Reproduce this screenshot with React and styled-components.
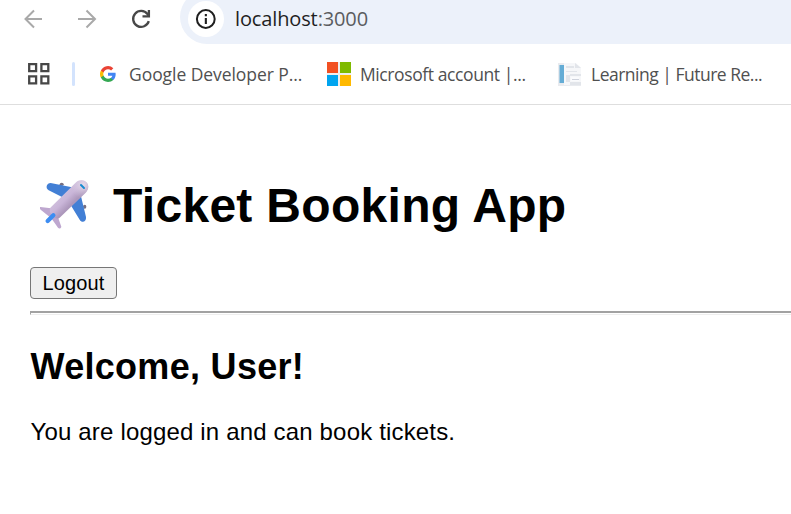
import React from 'react';
import styled, { createGlobalStyle } from 'styled-components';

const GlobalStyle = createGlobalStyle`
  * { box-sizing: border-box; }
  body {
    margin: 0;
    background: #fff;
    overflow: hidden;
    font-family: "Liberation Sans", Arial, sans-serif;
  }
`;

const Window = styled.div`
  width: 100%;
  height: 514px;
  overflow: hidden;
`;

const Toolbar = styled.div`
  display: flex;
  height: 44px;
  padding-left: 20px;
`;

const NavButton = styled.span`
  display: flex;
  flex: none;
  width: 54px;
  height: 38px;
  color: ${(p) => (p.$active ? '#474747' : '#a9a9a9')};
`;

const AddressBar = styled.div`
  flex: 1;
  display: flex;
  align-items: center;
  height: 54px;
  margin: -10px 0 0 -2px;
  padding: 3px 8px 0;
  background: #ecf1fa;
  border-radius: 27px 0 0 27px;
`;

const SiteInfo = styled.span`
  display: flex;
  width: 36px;
  height: 36px;
  border-radius: 50%;
  background: #fff;
`;

const Url = styled.span`
  margin-left: 11px;
  font: 20px/24px "Open Sans", "Noto Sans", sans-serif;
  letter-spacing: -0.13px;
  color: #1f1f1f;
`;

const Port = styled.span`
  color: #5a5c60;
`;

const Bookmarks = styled.div`
  display: flex;
  align-items: center;
  height: 61px;
  padding-left: 27px;
  border-bottom: 1px solid #dedede;
`;

const Divider = styled.span`
  flex: none;
  width: 3px;
  height: 24px;
  margin: 0 25px 0 22px;
  border-radius: 2px;
  background: #d3e3fd;
`;

const Bookmark = styled.span`
  display: flex;
  flex: none;
  align-items: center;
  gap: ${(p) => p.$gap}px;
  width: ${(p) => p.$width}px;
`;

const BookmarkLabel = styled.span`
  padding-bottom: 1px;
  font: 17.5px/24px "Open Sans", "Noto Sans", sans-serif;
  letter-spacing: ${(p) => p.$spacing};
  white-space: nowrap;
  color: #505050;
`;

const Icon = styled.svg`
  display: block;
  flex: none;
`;

const Page = styled.main`
  padding: 72px 0 0 30px;
`;

const Title = styled.h1`
  display: flex;
  align-items: center;
  gap: 23px;
  height: 56px;
  margin: 0 0 34px;
  padding-left: 10px;
  font-size: 48px;
  line-height: 56px;
  letter-spacing: 0.3px;
  white-space: nowrap;
`;

const TitleText = styled.span`
  padding-top: 2px;
`;

const LogoutButton = styled.button`
  display: block;
  width: 87px;
  height: 32px;
  padding: 0;
  border: 1.5px solid #767676;
  border-radius: 4px;
  background: #efefef;
  color: #000;
  font: 20px/26px "Liberation Sans", Arial, sans-serif;
  letter-spacing: 0.1px;
`;

const Rule = styled.hr`
  height: 4px;
  margin: 12px 0 0;
  border: 1px solid #a2a2a2;
  border-top-width: 2px;
  border-right: 0;
  border-bottom-color: #eeeeee;
`;

const Welcome = styled.h2`
  margin: 31px 0 0 0.5px;
  font-size: 36px;
  line-height: 42px;
  letter-spacing: 0.3px;
`;

const Message = styled.p`
  margin: 30px 0 0 0.5px;
  font-size: 24px;
  line-height: 28px;
  letter-spacing: 0.17px;
`;

const Back = () => (
  <Icon width="27" height="38" viewBox="0 0 27 38" fill="none" stroke="currentColor" strokeWidth="2">
    <path d="M22 19H5.5M14 10.5L5.5 19l8.5 8.5" />
  </Icon>
);

const Forward = () => (
  <Icon width="27" height="38" viewBox="0 0 27 38" fill="none" stroke="currentColor" strokeWidth="2">
    <path d="M4 19h16.5M12.5 10.5L21 19l-8.500 8.500" />
  </Icon>
);

const Reload = () => (
  <Icon width="27" height="38" viewBox="0 0 27 38" fill="none" stroke="currentColor" strokeWidth="2.3">
    <path d="M20.8 21.2A8 8 0 1 1 19.5 14l1.5 2.2" />
    <path d="M14.5 16.3h6.4V10" />
  </Icon>
);

const Info = () => (
  <Icon width="36" height="36" viewBox="0 0 36 36">
    <circle cx="17.8" cy="18" r="8.9" fill="none" stroke="#1f1f1f" strokeWidth="2" />
    <path d="M16.8 13h2.1v2.2h-2.1zM16.8 17h2.1v6h-2.1z" fill="#1f1f1f" />
  </Icon>
);

const Apps = () => (
  <Icon width="23" height="22" viewBox="0 0 23 22" fill="none" stroke="#474747" strokeWidth="2.3">
    <path d="M2.2 1.2h6.9v6.9H2.2zM14.4 1.2h6.9v6.9h-6.9zM2.2 13.4h6.9v6.9H2.2zM14.4 13.4h6.9v6.9h-6.9z" />
  </Icon>
);

const Google = () => (
  <Icon width="16" height="16" viewBox="0 0 24 24">
    <path fill="#4285f4" d="M23.5 12.3c0-.8-.1-1.6-.2-2.3H12v4.5h6.5a5.6 5.6 0 0 1-2.4 3.6v3h3.8c2.3-2.1 3.6-5.2 3.6-8.8z" />
    <path fill="#34a853" d="M12 24c3.2 0 6-1.1 7.9-2.9l-3.8-3c-1.1.7-2.4 1.1-4.1 1.1-3.1 0-5.8-2.1-6.7-4.9H1.3v3.1A12 12 0 0 0 12 24z" />
    <path fill="#fbbc05" d="M5.3 14.3a7.2 7.2 0 0 1 0-4.6V6.6h-4a12 12 0 0 0 0 10.8z" />
    <path fill="#ea4335" d="M12 4.8c1.8 0 3.3.6 4.6 1.8L20 3.2A12 12 0 0 0 1.3 6.6l4 3.1C6.2 6.9 8.9 4.8 12 4.8z" />
  </Icon>
);

const Microsoft = () => (
  <Icon width="24" height="24" viewBox="0 0 24 24">
    <path fill="#eeeeee" d="M0 0h24v24H0z" />
    <path fill="#f25022" d="M0 0h11v11H0z" />
    <path fill="#7fba00" d="M13 0h11v11H13z" />
    <path fill="#00a4ef" d="M0 13h11v11H0z" />
    <path fill="#ffb900" d="M13 13h11v11H13z" />
  </Icon>
);

const Document = () => (
  <Icon width="24" height="24" viewBox="0 0 24 24">
    <path fill="#e9ebef" d="M0 1h17l6 5v18H0z" />
    <path fill="#f6f7f9" d="M6 1h12l5 5v17H6z" />
    <path fill="#64acd5" d="M1.5 3H6v18H1.5z" />
    <path fill="#e2e5ea" d="M8 4h8v2H8zM8 9h11v1H8zM8 13h4v7H8zM12 12h11v2H12zM12 20h11v3H12zM17 1l6 5h-6z" />
    <path fill="#fafbfd" d="M13 15h8v4h-8z" />
    <path fill="#ced2dc" d="M14 17h7v1h-7z" />
  </Icon>
);

const Plane = () => (
  <Icon width="50" height="50" viewBox="60 45 150 150">
    <defs>
      <linearGradient id="hull" x1="120" y1="82" x2="155" y2="117" gradientUnits="userSpaceOnUse">
        <stop stopColor="#d3c4df" />
        <stop offset=".55" stopColor="#c9b5d8" />
        <stop offset="1" stopColor="#ad98bc" />
      </linearGradient>
      <radialGradient id="nose" cx="190" cy="60" r="40" gradientUnits="userSpaceOnUse">
        <stop stopColor="#e6dbe9" />
        <stop offset="1" stopColor="#d3c4df" stopOpacity="0" />
      </radialGradient>
    </defs>
    <ellipse cx="125" cy="58" rx="6" ry="5" fill="#776f80" />
    <ellipse cx="194" cy="125" rx="5" ry="6" fill="#776f80" />
    <path fill="#427fd5" d="M92 54l64 13-24 32-46-23c-11-7-6-22 6-22zM183 94l15 62c2 15-13 19-19 8l-27-44z" />
    <path fill="#bea7cf" d="M61 126l32 4 15-13 15 15-10 22 11 31c-1 6-7 7-10 3l-20-28-32-26c-3-3-5-7-1-8z" />
    <path fill="url(#hull)" d="M91 128l76-75c11-10 25-9 32-1 8 8 8 20-2 31l-78 75c-12 10-36-12-28-30z" />
    <path fill="url(#nose)" d="M91 128l76-75c11-10 25-9 32-1 8 8 8 20-2 31l-78 75c-12 10-36-12-28-30z" />
    <path d="M83 168l17-17" stroke="#3d8df2" strokeWidth="13" strokeLinecap="round" />
    <path d="M183 60l9 9" stroke="#168bd0" strokeWidth="6" strokeLinecap="round" />
  </Icon>
);

export default function App() {
  return (
    <Window>
      <GlobalStyle />
      <Toolbar>
        <NavButton><Back /></NavButton>
        <NavButton><Forward /></NavButton>
        <NavButton $active><Reload /></NavButton>
        <AddressBar>
          <SiteInfo><Info /></SiteInfo>
          <Url>localhost<Port>:3000</Port></Url>
        </AddressBar>
      </Toolbar>
      <Bookmarks>
        <Apps />
        <Divider />
        <Bookmark $gap={13} $width={227}>
          <Google />
          <BookmarkLabel $spacing="-0.06px">Google Developer P...</BookmarkLabel>
        </Bookmark>
        <Bookmark $gap={9} $width={231}>
          <Microsoft />
          <BookmarkLabel $spacing="-0.4px">Microsoft account |...</BookmarkLabel>
        </Bookmark>
        <Bookmark $gap={9} $width={210}>
          <Document />
          <BookmarkLabel $spacing="-0.5px">Learning | Future Re...</BookmarkLabel>
        </Bookmark>
      </Bookmarks>
      <Page>
        <Title>
          <Plane />
          <TitleText>Ticket Booking App</TitleText>
        </Title>
        <LogoutButton type="button">Logout</LogoutButton>
        <Rule />
        <Welcome>Welcome, User!</Welcome>
        <Message>You are logged in and can book tickets.</Message>
      </Page>
    </Window>
  );
}
